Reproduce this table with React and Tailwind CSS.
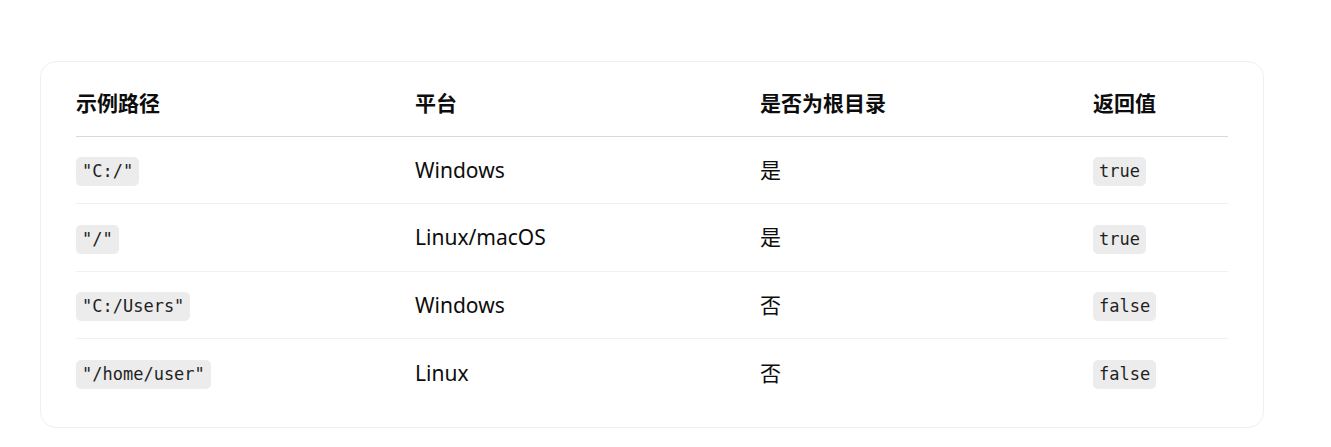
const rows = [
  { path: '"C:/"', platform: 'Windows', root: '是', ret: 'true' },
  { path: '"/"', platform: 'Linux/macOS', root: '是', ret: 'true' },
  { path: '"C:/Users"', platform: 'Windows', root: '否', ret: 'false' },
  { path: '"/home/user"', platform: 'Linux', root: '否', ret: 'false' },
]

const Code = ({ children }) => (
  <code className="inline-block rounded-[5px] bg-[#ececec] px-[6px] py-[4px] text-[17px] leading-[21px] text-[#1f1f1f] [font-family:'DejaVu_Sans_Mono','Liberation_Mono',monospace]">
    {children}
  </code>
)

export default function App() {
  return (
    <div className="min-h-[447px] bg-white pt-[61px] pl-[40px] [font-family:'Noto_Sans','Noto_Sans_CJK_SC',sans-serif] text-[#0d0d0d]">
      <div className="w-[1224px] rounded-[16px] border border-[#efefef] px-[35px] pt-[12px] pb-[21px]">
        <table className="w-[1152px] table-fixed border-collapse text-left">
          <colgroup>
            <col className="w-[339px]" />
            <col className="w-[345px]" />
            <col className="w-[333px]" />
            <col className="w-[135px]" />
          </colgroup>
          <thead>
            <tr className="border-b border-[#d9d9d9]">
              {['示例路径', '平台', '是否为根目录', '返回值'].map(h => (
                <th key={h} className="h-[62px] p-0 pb-[3px] align-middle text-[21px] font-bold leading-[30px]">
                  {h}
                </th>
              ))}
            </tr>
          </thead>
          <tbody>
            {rows.map((r, i) => (
              <tr key={i} className={i < rows.length - 1 ? 'border-b border-[#f0f0f0]' : ''}>
                <td className="h-[67.5px] p-0 pt-[4px] align-middle"><Code>{r.path}</Code></td>
                <td className="h-[67.5px] p-0 align-middle text-[21px] leading-[30px]">{r.platform}</td>
                <td className="h-[67.5px] p-0 align-middle text-[21px] leading-[30px]">{r.root}</td>
                <td className="h-[67.5px] p-0 pt-[4px] align-middle"><Code>{r.ret}</Code></td>
              </tr>
            ))}
          </tbody>
        </table>
      </div>
    </div>
  )
}
